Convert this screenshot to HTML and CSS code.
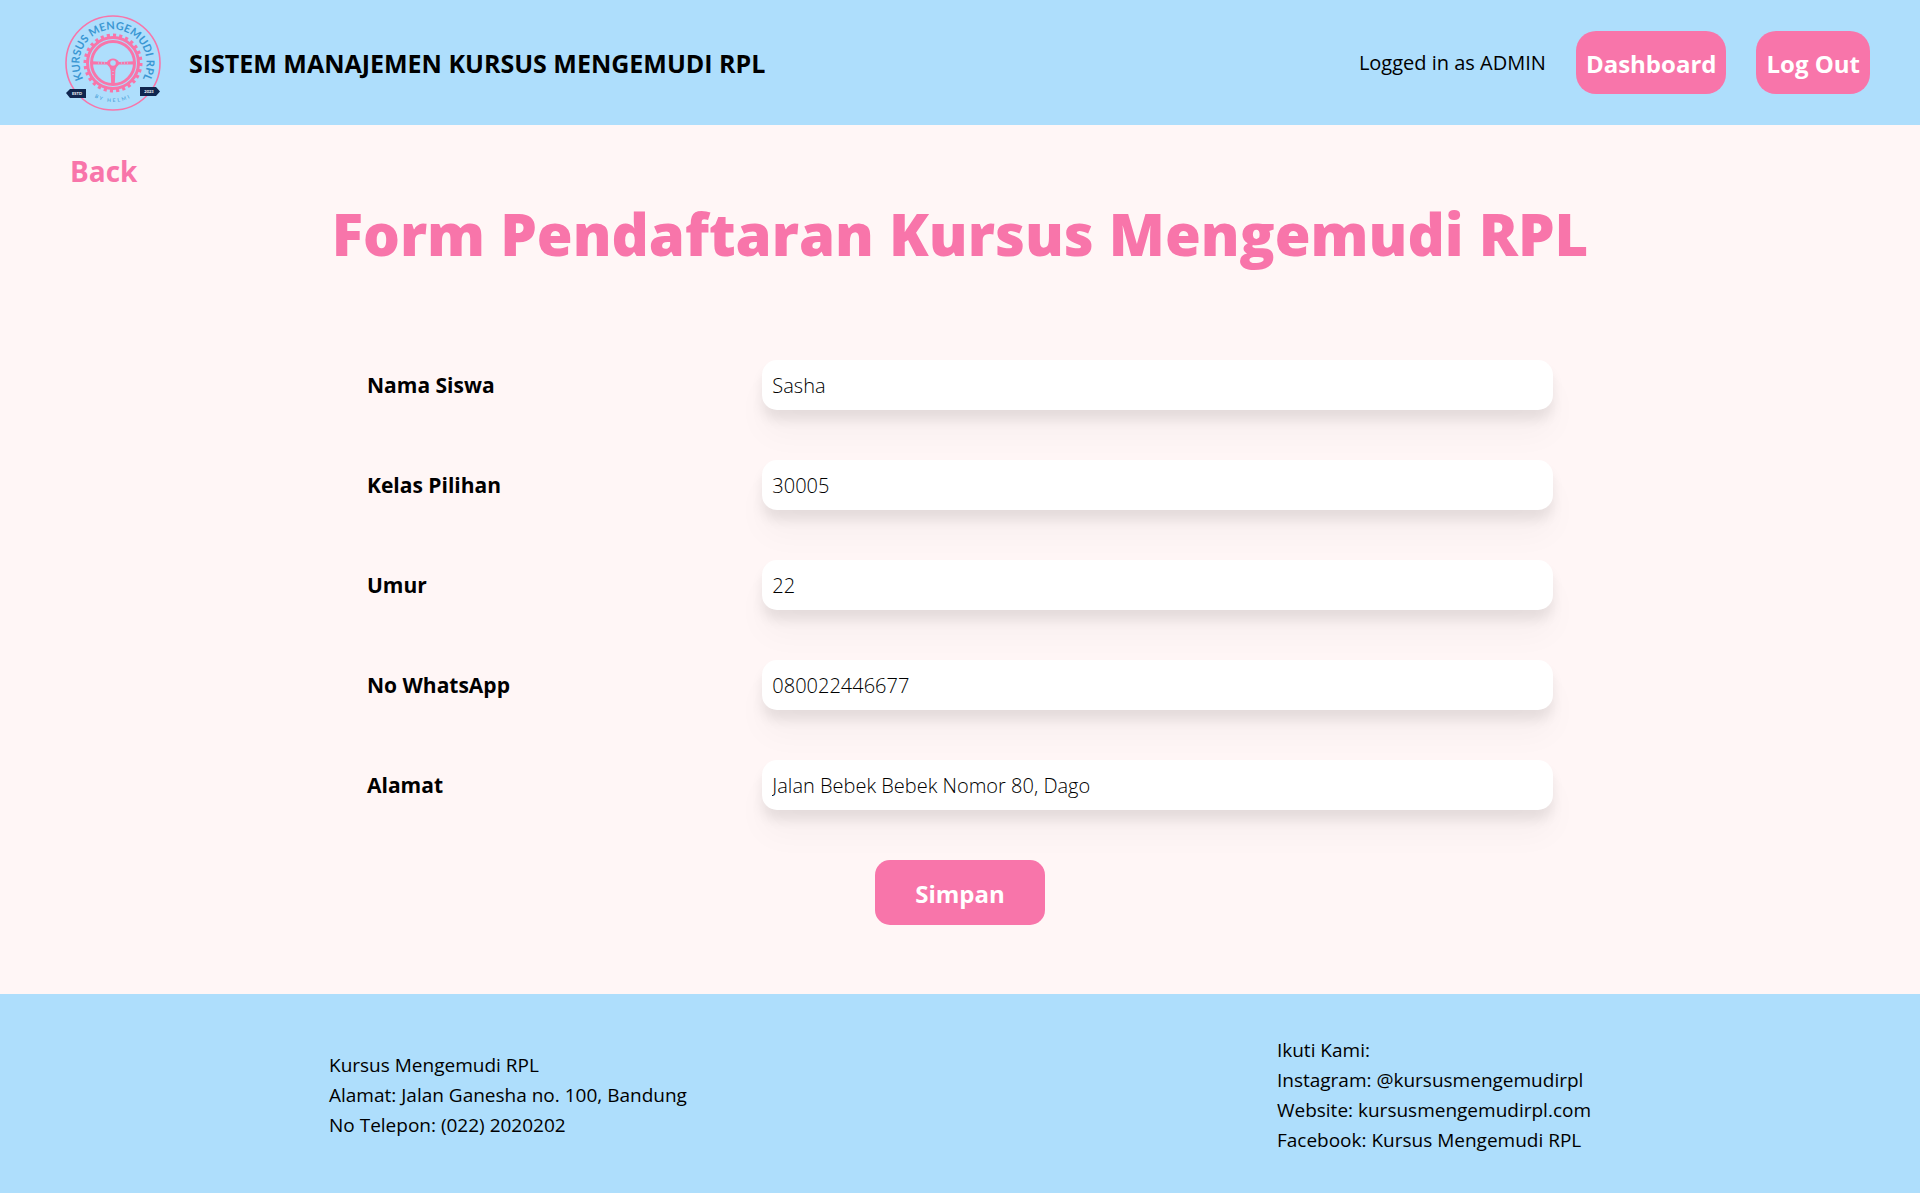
FILE: index.html
```html
<!DOCTYPE html>
<html lang="id">
<head>
<meta charset="utf-8">
<meta name="viewport" content="width=device-width, initial-scale=1">
<title>Form Pendaftaran Kursus Mengemudi RPL</title>
<link rel="stylesheet" href="styles.css">
</head>
<body>
<header class="topbar">
  <div class="brand">
    <svg class="logo" viewBox="0 0 100 100" role="img" aria-label="Kursus Mengemudi RPL">
      <defs>
        <path id="arc-top" d="M50 83.5 A33.5 33.5 0 1 1 50.1 83.5"/>
        <path id="arc-bottom" d="M11 50 A39 39 0 0 0 89 50"/>
      </defs>
      <circle class="logo-ring" cx="50" cy="50" r="47"/>
      <circle class="logo-teeth" cx="50" cy="50" r="27.5" pathLength="112"/>
      <circle class="logo-gear" cx="50" cy="50" r="25.5"/>
      <circle class="logo-wheel" cx="50" cy="50" r="21.5"/>
      <path class="logo-spoke" d="M29 48.2 L44 49 Q46 45.5 50 45.5 Q54 45.5 56 49 L71 48.2 V51.4 L56 51.6 Q53 54 52.4 57 L51.8 71 H48.2 L47.6 57 Q47 54 44 51.6 L29 51.4 Z"/>
      <circle class="logo-hub" cx="50" cy="50" r="2.8"/>
      <path class="logo-holes" d="M35 50 H42 M58 50 H65 M50 58 V64"/>
      <text class="logo-name"><textPath href="#arc-top" startOffset="50%">KURSUS MENGEMUDI RPL</textPath></text>
      <text class="logo-by"><textPath href="#arc-bottom" startOffset="50%">BY HELMI</textPath></text>
      <path class="logo-ribbon" d="M3 80 L7 76 H23 V85 H7 Z M97 78.5 L93 74 H77 V83 H93 Z"/>
      <text class="logo-date" x="14" y="82">ESTD</text>
      <text class="logo-date" x="86" y="80">2023</text>
    </svg>
    <span class="brand-name">SISTEM MANAJEMEN KURSUS MENGEMUDI RPL</span>
  </div>
  <nav class="actions">
    <span class="user">Logged in as ADMIN</span>
    <button class="nav-button" type="button">Dashboard</button>
    <button class="nav-button" type="button">Log Out</button>
  </nav>
</header>

<main class="content">
  <a class="back" href="#">Back</a>
  <h1 class="title">Form Pendaftaran Kursus Mengemudi RPL</h1>
  <form class="form">
    <div class="row">
      <label for="nama">Nama Siswa</label>
      <input id="nama" type="text" value="Sasha">
    </div>
    <div class="row">
      <label for="kelas">Kelas Pilihan</label>
      <input id="kelas" type="text" value="30005">
    </div>
    <div class="row">
      <label for="umur">Umur</label>
      <input id="umur" type="text" value="22">
    </div>
    <div class="row">
      <label for="wa">No WhatsApp</label>
      <input id="wa" type="text" value="080022446677">
    </div>
    <div class="row">
      <label for="alamat">Alamat</label>
      <input id="alamat" type="text" value="Jalan Bebek Bebek Nomor 80, Dago">
    </div>
    <button class="save" type="submit">Simpan</button>
  </form>
</main>

<footer class="footer">
  <div class="footer-inner">
    <div>
      <p>Kursus Mengemudi RPL</p>
      <p>Alamat: Jalan Ganesha no. 100, Bandung</p>
      <p>No Telepon: (022) 2020202</p>
    </div>
    <div>
      <p>Ikuti Kami:</p>
      <p>Instagram: @kursusmengemudirpl</p>
      <p>Website: kursusmengemudirpl.com</p>
      <p>Facebook: Kursus Mengemudi RPL</p>
    </div>
  </div>
</footer>
</body>
</html>
```
FILE: styles.css
```css
:root {
  --blue: #aedefc;
  --pink: #f875aa;
  --cream: #fff6f6;
}

* {
  box-sizing: border-box;
}

body {
  margin: 0;
  min-height: 100vh;
  display: flex;
  flex-direction: column;
  background: var(--cream);
  color: #000;
  font: 400 20px/30px "Segoe UI", "Open Sans", "Noto Sans", sans-serif;
}

button,
input {
  border: 0;
  font: inherit;
}

.topbar {
  display: flex;
  align-items: center;
  justify-content: space-between;
  min-height: 125px;
  padding: 12px 50px;
  background: var(--blue);
}

.brand {
  display: flex;
  align-items: center;
  gap: 26px;
  padding-left: 13px;
}

.brand-name {
  font-size: 25px;
  font-weight: 700;
}

.logo {
  width: 100px;
  height: 100px;
  flex: none;
}

.logo-ring,
.logo-teeth,
.logo-gear,
.logo-wheel,
.logo-holes {
  fill: none;
  stroke: var(--pink);
}

.logo-ring { stroke-width: 1.6; }
.logo-teeth { stroke-width: 4; stroke-dasharray: 2 2; }
.logo-gear { stroke-width: 3; }
.logo-wheel { stroke-width: 3; }
.logo-spoke { fill: var(--pink); }
.logo-hub { fill: var(--blue); }
.logo-holes { stroke: var(--blue); stroke-width: 1; stroke-dasharray: 1 2; }
.logo-ribbon { fill: #10264f; }

.logo-name {
  fill: #3a97d3;
  font: 700 11px Lato, sans-serif;
  text-anchor: middle;
}

.logo-by {
  fill: #3a97d3;
  font: 400 5px Lato, sans-serif;
  letter-spacing: 2px;
  text-anchor: middle;
}

.logo-date {
  fill: #fff;
  font: 700 4px Lato, sans-serif;
  text-anchor: middle;
}

.actions {
  display: flex;
  align-items: center;
  gap: 30px;
}

.nav-button {
  padding: 13px 10px 11px;
  border-radius: 20px;
  background: var(--pink);
  color: #fff;
  font-size: 24px;
  font-weight: 700;
  line-height: 39px;
}

.content {
  flex: 1;
  display: flex;
  flex-direction: column;
  padding: 24px 70px 69px;
}

.back {
  align-self: flex-start;
  color: var(--pink);
  font-size: 28px;
  font-weight: 700;
  line-height: 45px;
  text-decoration: none;
}

.title {
  margin: 2px 0 0;
  color: var(--pink);
  font-size: 58px;
  font-weight: 800;
  line-height: 75px;
  text-align: center;
}

.form {
  display: flex;
  flex-direction: column;
  gap: 50px;
  width: 100%;
  max-width: 1186px;
  margin: 89px auto 0;
}

.row {
  display: grid;
  grid-template-columns: 1fr 2fr;
  align-items: center;
}

.row label {
  font-size: 21px;
  font-weight: 700;
}

.row input {
  width: 100%;
  height: 50px;
  padding: 10px;
  border-radius: 15px;
  background: #fff;
  color: #000;
  font-weight: 300;
  box-shadow: 0 25px 32px rgb(0 0 0 / 0.03), 0 10px 12px rgb(0 0 0 / 0.08);
}

.save {
  align-self: center;
  padding: 13px 40px 11px;
  border-radius: 15px;
  background: var(--pink);
  color: #fff;
  font-size: 24px;
  font-weight: 700;
  line-height: 41px;
}

.footer {
  padding: 41px 40px 38px;
  background: var(--blue);
  font-size: 19px;
  font-weight: 500;
}

.footer-inner {
  display: flex;
  align-items: center;
  justify-content: space-between;
  max-width: 1262px;
  margin: 0 auto;
}

.footer p {
  margin: 0;
}
```
